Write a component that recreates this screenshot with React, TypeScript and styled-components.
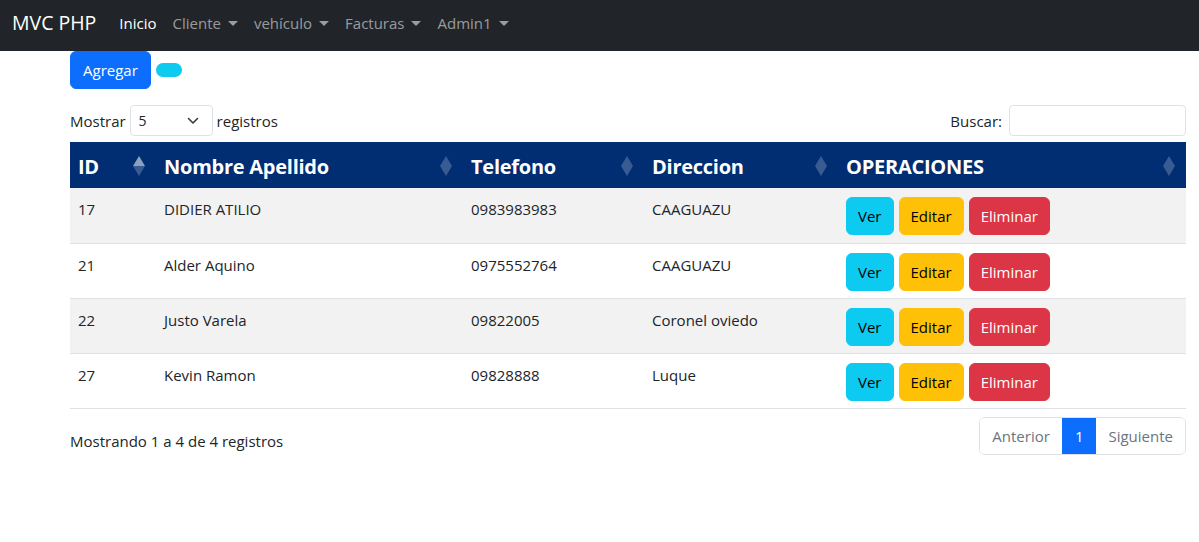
import React from "react";
import styled, { createGlobalStyle } from "styled-components";

const Global = createGlobalStyle`
  * { box-sizing: border-box; }
  body {
    margin: 0;
    font-family: "Segoe UI", "Open Sans", "Noto Sans", sans-serif;
    font-size: 15px;
    line-height: 24px;
    color: #212529;
    background: #fff;
  }
`;

const Navbar = styled.nav`
  height: 51px;
  background: #212529;
  display: flex;
  align-items: center;
  padding: 0 12px 5px;
`;

const Brand = styled.span`
  font-size: 19.5px;
  color: #fff;
  margin-right: 15px;
  line-height: 30px;
`;

const NavLink = styled.span<{ $active?: boolean }>`
  padding: 8px;
  color: ${(p) => (p.$active ? "#fff" : "rgba(255,255,255,0.55)")};
  display: inline-flex;
  align-items: center;
`;

const Caret = styled.span`
  display: inline-block;
  margin-left: 7px;
  border-top: 5px solid currentColor;
  border-left: 5px solid transparent;
  border-right: 5px solid transparent;
  margin-top: 1px;
`;

const Main = styled.main`
  padding: 0 13px 0 70px;
`;

const TopBar = styled.div`
  display: flex;
  align-items: center;
  gap: 5px;
  height: 38px;
`;

const Btn = styled.button<{ $bg: string; $fg: string; $pad?: number }>`
  font-family: inherit;
  font-size: 15px;
  line-height: 24px;
  padding: 6px ${(p) => p.$pad ?? 12}px;
  border: 1px solid ${(p) => p.$bg};
  background: ${(p) => p.$bg};
  color: ${(p) => p.$fg};
  border-radius: 6px;
  cursor: pointer;
`;

const EmptyBtn = styled.span`
  display: inline-block;
  width: 26px;
  height: 14px;
  background: #0dcaf0;
  border-radius: 7px;
`;

const Controls = styled.div`
  display: flex;
  justify-content: space-between;
  align-items: center;
  margin-top: 16px;
  height: 31px;
`;

const Label = styled.label`
  display: flex;
  align-items: center;
  gap: 4px;
`;

const SelectBox = styled.div`
  width: 83px;
  height: 31px;
  border: 1px solid #dee2e6;
  border-radius: 4px;
  display: flex;
  align-items: center;
  justify-content: space-between;
  padding: 0 13px 0 8px;
  font-size: 14px;
`;

const SearchInput = styled.input`
  width: 177px;
  height: 31px;
  border: 1px solid #dee2e6;
  border-radius: 4px;
  margin-left: 3px;
  font-family: inherit;
`;

const Table = styled.table`
  width: 100%;
  border-collapse: collapse;
  margin-top: 6px;
`;

const Th = styled.th<{ $w: number }>`
  width: ${(p) => p.$w}px;
  height: 46px;
  background: #012d72;
  color: #fff;
  font-size: 20px;
  font-weight: 700;
  text-align: left;
  padding: 3px 30px 0 8px;
  position: relative;
  letter-spacing: -0.25px;
`;

const SortIcon = styled.span`
  position: absolute;
  right: 11px;
  top: 14px;
  display: flex;
  flex-direction: column;
`;

const Tri = styled.span<{ $dir: "up" | "down"; $o: number }>`
  width: 0;
  height: 0;
  border-left: 6px solid transparent;
  border-right: 6px solid transparent;
  ${(p) =>
    p.$dir === "up"
      ? `border-bottom: 10px solid rgba(255,255,255,${p.$o});`
      : `border-top: 10px solid rgba(255,255,255,${p.$o});`}
`;

const Tr = styled.tr<{ $striped: boolean }>`
  background: ${(p) => (p.$striped ? "#f2f2f2" : "#fff")};
  border-bottom: 1px solid #dee2e6;
`;

const Td = styled.td`
  padding: 9px 8px 7px;
  vertical-align: top;
  height: 55px;
`;

const Ops = styled.div`
  display: flex;
  gap: 5px;
`;

const Footer = styled.div`
  display: flex;
  justify-content: space-between;
  align-items: flex-start;
  margin-top: 8px;
`;

const Info = styled.div`
  padding-top: 12px;
`;

const Pagination = styled.div`
  display: flex;
  border: 1px solid #dee2e6;
  border-radius: 6px;
  overflow: hidden;
  height: 38px;
`;

const PageItem = styled.span<{ $active?: boolean }>`
  padding: 0 ${(p) => (p.$active ? 13 : 12)}px;
  line-height: 36px;
  color: ${(p) => (p.$active ? "#fff" : "#6c757d")};
  background: ${(p) => (p.$active ? "#0d6efd" : "#fff")};
`;

const rows = [
  ["17", "DIDIER ATILIO", "0983983983", "CAAGUAZU"],
  ["21", "Alder Aquino", "0975552764", "CAAGUAZU"],
  ["22", "Justo Varela", "09822005", "Coronel oviedo"],
  ["27", "Kevin Ramon", "09828888", "Luque"],
];

const cols: [string, number][] = [
  ["ID", 86],
  ["Nombre Apellido", 307],
  ["Telefono", 181],
  ["Direccion", 194],
  ["OPERACIONES", 348],
];

export default function App() {
  return (
    <>
      <Global />
      <Navbar>
        <Brand>MVC PHP</Brand>
        <NavLink $active>Inicio</NavLink>
        <NavLink>
          Cliente<Caret />
        </NavLink>
        <NavLink>
          vehículo<Caret />
        </NavLink>
        <NavLink>
          Facturas<Caret />
        </NavLink>
        <NavLink>
          Admin1<Caret />
        </NavLink>
      </Navbar>
      <Main>
        <TopBar>
          <Btn $bg="#0d6efd" $fg="#fff">Agregar</Btn>
          <EmptyBtn />
        </TopBar>
        <Controls>
          <Label>
            Mostrar
            <SelectBox>
              <span>5</span>
              <svg width="12" height="8" viewBox="0 0 12 8">
                <path d="M1.5 1.5 6 6l4.5-4.5" fill="none" stroke="#343a40" strokeWidth="1.6" strokeLinecap="round" strokeLinejoin="round" />
              </svg>
            </SelectBox>
            registros
          </Label>
          <Label>
            Buscar:
            <SearchInput />
          </Label>
        </Controls>
        <Table>
          <thead>
            <tr>
              {cols.map(([c, w], i) => (
                <Th key={c} $w={w}>
                  {c}
                  <SortIcon>
                    <Tri $dir="up" $o={i === 0 ? 0.55 : 0.22} />
                    <Tri $dir="down" $o={0.22} />
                  </SortIcon>
                </Th>
              ))}
            </tr>
          </thead>
          <tbody>
            {rows.map((r, i) => (
              <Tr key={r[0]} $striped={i % 2 === 0}>
                {r.map((c, j) => (
                  <Td key={j}>{c}</Td>
                ))}
                <Td>
                  <Ops>
                    <Btn $bg="#0dcaf0" $fg="#000" $pad={11}>Ver</Btn>
                    <Btn $bg="#ffc107" $fg="#000" $pad={11}>Editar</Btn>
                    <Btn $bg="#dc3545" $fg="#fff" $pad={11}>Eliminar</Btn>
                  </Ops>
                </Td>
              </Tr>
            ))}
          </tbody>
        </Table>
        <Footer>
          <Info>Mostrando 1 a 4 de 4 registros</Info>
          <Pagination>
            <PageItem>Anterior</PageItem>
            <PageItem $active>1</PageItem>
            <PageItem>Siguiente</PageItem>
          </Pagination>
        </Footer>
      </Main>
    </>
  );
}
